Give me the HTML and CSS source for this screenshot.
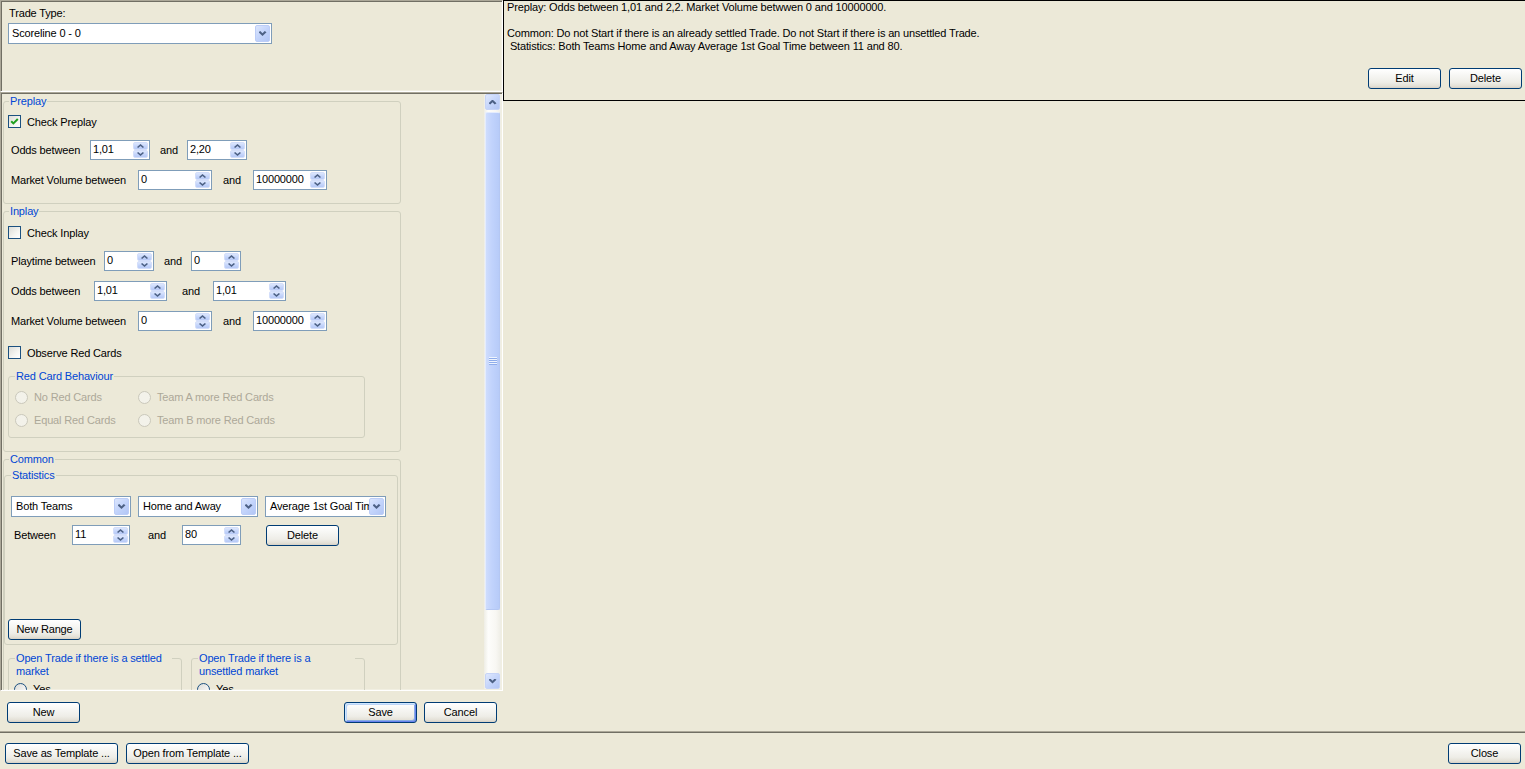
FILE: index.html
```html
<!DOCTYPE html>
<html>
<head>
<meta charset="utf-8">
<title>Trade Settings</title>
<link rel="stylesheet" href="styles.css">
</head>
<body>
<div class="window">
  <div class="main">
    <div class="left">
      <div class="type-panel sunken">
        <div class="type-label">Trade Type:</div>
        <div class="combo combo-type"><span class="combo-text">Scoreline 0 - 0</span><span class="combo-btn"></span></div>
      </div>

      <div class="scroll-panel sunken">
        <div class="scroll-content">
          <fieldset class="gb gb-main gb-preplay">
            <legend>Preplay</legend>
            <div class="check-row pp-check"><span class="chk"><svg width="11" height="11" viewBox="0 0 11 11"><path d="M2.2 5.2 L4.4 7.4 L8.8 3" fill="none" stroke="#21A121" stroke-width="2"/></svg></span><span>Check Preplay</span></div>
            <div class="row pp-odds">
              <span class="lbl">Odds between</span>
              <span class="spin"><span class="val">1,01</span><span class="sbs"><span class="sb sb-up"></span><span class="sb sb-dn"></span></span></span>
              <span class="and">and</span>
              <span class="spin"><span class="val">2,20</span><span class="sbs"><span class="sb sb-up"></span><span class="sb sb-dn"></span></span></span>
            </div>
            <div class="row vol-row pp-vol">
              <span class="lbl">Market Volume between</span>
              <span class="spin"><span class="val">0</span><span class="sbs"><span class="sb sb-up"></span><span class="sb sb-dn"></span></span></span>
              <span class="and">and</span>
              <span class="spin"><span class="val">10000000</span><span class="sbs"><span class="sb sb-up"></span><span class="sb sb-dn"></span></span></span>
            </div>
          </fieldset>

          <fieldset class="gb gb-main gb-inplay">
            <legend>Inplay</legend>
            <div class="check-row ip-check"><span class="chk"></span><span>Check Inplay</span></div>
            <div class="row ip-time">
              <span class="lbl">Playtime between</span>
              <span class="spin"><span class="val">0</span><span class="sbs"><span class="sb sb-up"></span><span class="sb sb-dn"></span></span></span>
              <span class="and">and</span>
              <span class="spin"><span class="val">0</span><span class="sbs"><span class="sb sb-up"></span><span class="sb sb-dn"></span></span></span>
            </div>
            <div class="row ip-odds">
              <span class="lbl">Odds between</span>
              <span class="spin"><span class="val">1,01</span><span class="sbs"><span class="sb sb-up"></span><span class="sb sb-dn"></span></span></span>
              <span class="and">and</span>
              <span class="spin"><span class="val">1,01</span><span class="sbs"><span class="sb sb-up"></span><span class="sb sb-dn"></span></span></span>
            </div>
            <div class="row vol-row ip-vol">
              <span class="lbl">Market Volume between</span>
              <span class="spin"><span class="val">0</span><span class="sbs"><span class="sb sb-up"></span><span class="sb sb-dn"></span></span></span>
              <span class="and">and</span>
              <span class="spin"><span class="val">10000000</span><span class="sbs"><span class="sb sb-up"></span><span class="sb sb-dn"></span></span></span>
            </div>
            <div class="check-row ip-red"><span class="chk"></span><span>Observe Red Cards</span></div>

            <fieldset class="gb gb-red">
              <legend>Red Card Behaviour</legend>
              <div class="radio-grid">
                <span class="radio disabled"><span class="rb"></span>No Red Cards</span>
                <span class="radio disabled"><span class="rb"></span>Team A more Red Cards</span>
                <span class="radio disabled"><span class="rb"></span>Equal Red Cards</span>
                <span class="radio disabled"><span class="rb"></span>Team B more Red Cards</span>
              </div>
            </fieldset>
          </fieldset>

          <fieldset class="gb gb-main gb-common">
            <legend>Common</legend>
            <fieldset class="gb gb-stats">
              <legend>Statistics</legend>
              <div class="stat-combos">
                <div class="combo combo-team"><span class="combo-text">Both Teams</span><span class="combo-btn"></span></div>
                <div class="combo combo-venue"><span class="combo-text">Home and Away</span><span class="combo-btn"></span></div>
                <div class="combo combo-stat"><span class="combo-text">Average 1st Goal Time</span><span class="combo-btn"></span></div>
              </div>
              <div class="row st-range">
                <span class="lbl">Between</span>
                <span class="spin"><span class="val">11</span><span class="sbs"><span class="sb sb-up"></span><span class="sb sb-dn"></span></span></span>
                <span class="and">and</span>
                <span class="spin"><span class="val">80</span><span class="sbs"><span class="sb sb-up"></span><span class="sb sb-dn"></span></span></span>
                <button class="btn st-delete">Delete</button>
              </div>
              <button class="btn new-range">New Range</button>
            </fieldset>

            <div class="open-row">
              <fieldset class="gb gb-open">
                <legend>Open Trade if there is a settled market</legend>
                <div class="radio open-radio"><span class="rb"></span>Yes</div>
              </fieldset>
              <fieldset class="gb gb-open">
                <legend>Open Trade if there is a unsettled market</legend>
                <div class="radio open-radio"><span class="rb"></span>Yes</div>
              </fieldset>
            </div>
          </fieldset>
        </div>

        <div class="vscroll">
          <div class="sc-btn sc-up"></div>
          <div class="sc-thumb"><span class="grip"></span></div>
          <div class="sc-track"></div>
          <div class="sc-btn sc-dn"></div>
        </div>
      </div>

      <div class="form-buttons">
        <button class="btn">New</button>
        <span class="spacer"></span>
        <button class="btn btn-default">Save</button>
        <button class="btn">Cancel</button>
      </div>
    </div>

    <div class="right">
      <div class="summary">
        <div class="summary-text">
          <div class="line">Preplay: Odds between 1,01 and 2,2. Market Volume betwwen 0 and 10000000.</div>
          <div class="line"></div>
          <div class="line">Common: Do not Start if there is an already settled Trade. Do not Start if there is an unsettled Trade.</div>
          <div class="line"> Statistics: Both Teams Home and Away Average 1st Goal Time between 11 and 80.</div>
        </div>
        <div class="summary-buttons">
          <button class="btn">Edit</button>
          <button class="btn">Delete</button>
        </div>
      </div>
    </div>
  </div>

  <div class="footer">
    <button class="btn btn-tpl-save">Save as Template ...</button>
    <button class="btn btn-tpl-open">Open from Template ...</button>
    <span class="spacer"></span>
    <button class="btn">Close</button>
  </div>
</div>
</body>
</html>
```

FILE: styles.css
```css
* { box-sizing: border-box; }
html, body { margin: 0; padding: 0; }
body {
  width: 1525px;
  height: 769px;
  overflow: hidden;
  background: #ECE9D8;
  color: #000;
  font-family: "Liberation Sans", Arial, sans-serif;
  font-size: 11px;
  letter-spacing: -0.15px;
  line-height: 13px;
}

.window { display: flex; flex-direction: column; height: 769px; }
.main { display: flex; height: 731px; flex: none; }
.left { width: 503px; flex: none; display: flex; flex-direction: column; }
.right { flex: 1; min-width: 0; }

.sunken {
  border: 1px solid;
  border-color: #ACA899 #FFFFFF #FFFFFF #ACA899;
  box-shadow: inset 1px 1px 0 #716F64, inset -1px -1px 0 #F1EFE2;
}

/* ---------- Buttons ---------- */
.btn {
  flex: none;
  width: 73px;
  height: 21px;
  padding: 0;
  margin: 0;
  font: inherit;
  letter-spacing: inherit;
  line-height: 17px;
  color: #000;
  border: 1px solid #003C74;
  border-radius: 3px;
  background: linear-gradient(180deg, #FFFFFF 0%, #F6F6F3 35%, #EEEDE7 70%, #E3E0D6 90%, #D6D0C5 100%);
  text-align: center;
  white-space: nowrap;
}
.btn-default {
  box-shadow: inset 1px 1px 0 #CEE7FF, inset -1px -1px 0 #6982EE, inset 2px 2px 0 #BCD4F6, inset -2px -2px 0 #89ADE4;
}

/* ---------- Trade type ---------- */
.type-panel { height: 92px; flex: none; padding: 6px 0 0 7px; }
.type-label { height: 13px; padding-left: 1px; }
.combo-type { width: 264px; margin-top: 3px; }

/* ---------- Combo ---------- */
.combo {
  display: flex;
  flex: none;
  height: 21px;
  border: 1px solid #7F9DB9;
  background: #fff;
  padding: 1px;
  overflow: hidden;
}
.combo-text {
  flex: 1;
  min-width: 0;
  white-space: nowrap;
  overflow: hidden;
  line-height: 17px;
  padding-left: 2px;
}
.combo-btn {
  flex: none;
  width: 15px;
  border-radius: 2px;
  border: 1px solid #BCCDF7;
  background: linear-gradient(135deg, #DCE6FD 0%, #C3D4FB 50%, #B2C6F5 100%);
  display: flex;
  align-items: center;
  justify-content: center;
}
.combo-btn::after {
  content: "";
  width: 8px;
  height: 5px;
  background: #4D6185;
  clip-path: polygon(0 25%, 22% 0, 50% 45%, 78% 0, 100% 25%, 50% 100%);
}

/* ---------- Scroll panel ---------- */
.scroll-panel { height: 599px; flex: none; display: flex; }
.scroll-content {
  flex: 1;
  min-width: 0;
  overflow: hidden;
  padding: 2px 0 0 2px;
}

/* ---------- Group boxes ---------- */
.gb {
  margin: 0;
  padding: 0;
  border: 1px solid #D0D0BF;
  border-radius: 3px;
  min-width: 0;
}
.gb > legend {
  margin-left: 6px;
  padding: 0 1px;
  color: #0046D5;
  line-height: 13px;
  height: 13px;
}
.gb-main { width: 398px; }
.gb-main > legend { margin-left: 5px; }
.gb-inplay, .gb-common { margin-top: 1px; }

/* rows */
.row { display: flex; align-items: center; height: 20px; padding-left: 7px; }
.row .lbl, .row .and { flex: none; white-space: nowrap; padding-top: 1px; }

.check-row { display: flex; align-items: center; height: 13px; gap: 6px; padding-left: 4px; }
.check-row > span:last-child { padding-top: 1px; }
.chk {
  flex: none;
  width: 13px;
  height: 13px;
  border: 1px solid #1C5180;
  background: linear-gradient(135deg, #DCDCD7 0%, #F5F5F1 60%, #FFFFFF 100%);
  display: flex;
  align-items: center;
  justify-content: center;
}

/* spin */
.spin {
  flex: none;
  display: flex;
  height: 20px;
  border: 1px solid #7F9DB9;
  background: #fff;
  padding: 1px;
}
.spin .val { flex: 1; min-width: 0; padding-left: 1px; line-height: 15px; white-space: nowrap; overflow: hidden; }
.sbs { flex: none; width: 15px; display: flex; flex-direction: column; }
.sb {
  flex: 1;
  display: flex;
  align-items: center;
  justify-content: center;
  border-radius: 2px;
  border: 1px solid #D3DEFA;
  background: linear-gradient(180deg, #DDE7FD 0%, #C6D6FB 50%, #B6C9F6 100%);
}
.sb-up::after, .sb-dn::after {
  content: "";
  width: 7px;
  height: 4px;
  background: #4D6185;
}
.sb-up::after { clip-path: polygon(50% 0, 100% 72%, 84% 100%, 50% 48%, 16% 100%, 0 72%); }
.sb-dn::after { clip-path: polygon(0 28%, 16% 0, 50% 52%, 84% 0, 100% 28%, 50% 100%); }

/* Preplay */
.pp-check { margin-top: 7px; }
.pp-odds { margin-top: 12px; }
.pp-odds .lbl { width: 79px; }
.pp-odds .spin { width: 60px; }
.pp-odds .and { margin-left: 10px; width: 27px; }
.vol-row { margin-top: 10px; }
.vol-row .lbl { width: 127px; }
.vol-row .spin { width: 74px; }
.vol-row .and { margin-left: 11px; width: 30px; }
.pp-vol { margin-bottom: 13px; }

/* Inplay */
.ip-check { margin-top: 8px; }
.ip-time { margin-top: 12px; }
.ip-time .lbl { width: 93px; }
.ip-time .spin { width: 50px; }
.ip-time .and { margin-left: 10px; width: 27px; }
.ip-odds { margin-top: 10px; }
.ip-odds .lbl { width: 83px; }
.ip-odds .spin { width: 73px; }
.ip-odds .and { margin-left: 15px; width: 31px; }
.ip-red { margin-top: 15px; }

.gb-red { width: 357px; margin: 11px 0 13px 4px; }
.radio-grid {
  display: grid;
  grid-template-columns: 123px auto;
  grid-auto-rows: 13px;
  row-gap: 10px;
  margin: 8px 0 10px 0;
  padding-left: 6px;
}
.radio { display: flex; align-items: center; gap: 6px; height: 13px; white-space: nowrap; }
.rb {
  flex: none;
  width: 13px;
  height: 13px;
  border-radius: 50%;
  border: 1px solid #1C5180;
  background: linear-gradient(135deg, #DCDCD7 0%, #FFFFFF 100%);
}
.radio.disabled { color: #ACA899; }
.radio.disabled .rb { border-color: #CAC8BB; background: #F3F2EA; }

/* Common */
.gb-common { padding-right: 2px; }
.gb-stats { margin-top: 3px; }
.stat-combos { display: flex; gap: 7px; margin-top: 14px; padding-left: 6px; }
.combo-team { width: 120px; }
.combo-venue { width: 120px; }
.combo-stat { width: 121px; }
.stat-combos .combo-text { padding-left: 3px; }
.st-range { margin-top: 8px; padding-left: 9px; }
.st-range .lbl { width: 58px; }
.st-range .spin { width: 58px; }
.st-range .spin + .and + .spin { width: 59px; }
.st-range .and { margin-left: 18px; width: 34px; }
.st-range .st-delete { margin-left: 25px; }
.gb-stats .new-range { display: block; margin: 74px 0 4px 3px; }

.open-row { display: flex; gap: 9px; margin: 7px 0 0 4px; }
.gb-open { width: 174px; flex: none; }
.gb-open > legend { width: 157px; white-space: normal; }
.open-radio { margin: 18px 0 12px; padding-left: 5px; }

/* ---------- Scrollbar ---------- */
.vscroll {
  flex: none;
  width: 17px;
  margin: 1px 1px 1px 0;
  display: flex;
  flex-direction: column;
  background: linear-gradient(90deg, #EEEDE5 0%, #FDFDFB 25%, #F8F7F3 70%, #EEEDE5 100%);
}
.sc-btn {
  flex: none;
  height: 16px;
  margin: 0 1px;
  border-radius: 2px;
  border: 1px solid #C6D4F7;
  background: linear-gradient(135deg, #DFE8FD 0%, #C6D6FB 50%, #B3C6F4 100%);
  display: flex;
  align-items: center;
  justify-content: center;
}
.sc-up::after, .sc-dn::after {
  content: "";
  width: 8px;
  height: 5px;
  background: #4D6185;
}
.sc-up::after { clip-path: polygon(50% 0, 100% 75%, 78% 100%, 50% 55%, 22% 100%, 0 75%); }
.sc-dn::after { clip-path: polygon(0 25%, 22% 0, 50% 45%, 78% 0, 100% 25%, 50% 100%); }
.sc-thumb {
  flex: none;
  height: 498px;
  margin: 2px 1px 0 1px;
  border-radius: 2px;
  border: 1px solid #B4C7F3;
  border-left-color: #E4ECFE;
  border-top-color: #E4ECFE;
  background: linear-gradient(90deg, #CFDDFD 0%, #C1D3FC 45%, #B7CBF8 100%);
  display: flex;
  align-items: center;
  justify-content: center;
}
.grip {
  width: 8px;
  height: 8px;
  background: repeating-linear-gradient(180deg, #EEF4FE 0 1px, #8FADEB 1px 2px);
}
.sc-track { flex: 1; }

.form-buttons {
  height: 40px;
  flex: none;
  display: flex;
  align-items: flex-start;
  gap: 7px;
  padding: 11px 6px 0 7px;
}
.spacer { flex: 1; }

/* ---------- Summary ---------- */
.summary {
  height: 101px;
  border: 1px solid #000;
  border-right: 0;
  display: flex;
  flex-direction: column;
}
.summary-text { flex: 1; min-height: 0; padding-left: 3px; overflow: hidden; }
.summary-text .line { height: 13px; white-space: pre; }
.summary-buttons { display: flex; justify-content: flex-end; gap: 8px; padding: 0 3px 11px 0; }

/* ---------- Footer ---------- */
.footer {
  flex: 1;
  display: flex;
  align-items: flex-start;
  gap: 8px;
  border-top: 1px solid #ACA899;
  box-shadow: inset 0 1px 0 #716F64;
  padding: 11px 4px 0 5px;
}
.btn-tpl-save { width: 113px; }
.btn-tpl-open { width: 123px; }
```
